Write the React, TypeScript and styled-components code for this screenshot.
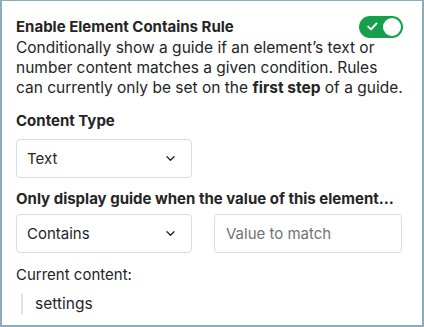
import React from "react";
import styled, { createGlobalStyle } from "styled-components";

const Global = createGlobalStyle`
  html, body { margin: 0; padding: 0; background: #fff; }
  body { font-family: Inter, "Noto Sans", sans-serif; color: #252525; }
  * { box-sizing: border-box; }
`;

const Panel = styled.div`
  width: 424px;
  height: 327px;
  border: 2px solid #8eabb9;
  border-top-width: 1px;
  padding: 14px 20px 0 14px;
  display: flex;
  flex-direction: column;
  background: #fff;
  overflow: hidden;
`;

const Header = styled.div`
  display: flex;
  align-items: flex-start;
  justify-content: space-between;
`;

const Title = styled.div`
  font-size: 15px;
  font-weight: 700;
  line-height: 20px;
  margin-top: 2px;
`;

const Desc = styled.p`
  margin: 0;
  font-size: 15.5px;
  line-height: 20px;
  white-space: nowrap;
  b { font-weight: 700; }
`;

const Toggle = styled.div`
  width: 44px;
  height: 22px;
  border-radius: 11px;
  background: #15a04b;
  position: relative;
  flex-shrink: 0;
  margin-top: 1px;
  margin-right: -1px;
`;

const Knob = styled.div`
  position: absolute;
  right: 2px;
  top: 2px;
  width: 18px;
  height: 18px;
  border-radius: 50%;
  background: #fff;
`;

const Check = styled.svg`
  position: absolute;
  left: 8px;
  top: 6px;
`;

const Label = styled.div<{ $top: number }>`
  font-size: 15px;
  font-weight: 700;
  line-height: 20px;
  margin-top: ${(p) => p.$top}px;
`;

const Row = styled.div<{ $top: number }>`
  display: flex;
  gap: 22px;
  margin-top: ${(p) => p.$top}px;
`;

const Select = styled.div<{ $w: number }>`
  width: ${(p) => p.$w}px;
  height: 39px;
  border: 1px solid #dcdce0;
  border-radius: 4px;
  display: flex;
  align-items: center;
  justify-content: space-between;
  padding: 0 16px 0 10px;
  font-size: 15px;
`;

const Input = styled.div`
  flex: 1;
  height: 39px;
  border: 1px solid #dcdce0;
  border-radius: 4px;
  display: flex;
  align-items: center;
  padding: 0 11px;
  font-size: 15px;
  color: #737373;
`;

const Plain = styled.div`
  font-size: 15px;
  line-height: 20px;
  margin-top: 12px;
`;

const Quote = styled.div`
  margin-top: 9px;
  margin-left: 5px;
  border-left: 2px solid #e2e2e6;
  padding-left: 12px;
  font-size: 15.5px;
  line-height: 20px;
`;

const Chevron = () => (
  <svg width="9" height="5" viewBox="0 0 9 5" fill="none">
    <path d="M1 0.8l3.5 3.4 3.5-3.4" stroke="#222" strokeWidth="1.3" strokeLinecap="round" strokeLinejoin="round" />
  </svg>
);

export default function App() {
  return (
    <>
      <Global />
      <Panel>
        <Header>
          <Title>Enable Element Contains Rule</Title>
          <Toggle>
            <Check width="11" height="9" viewBox="0 0 11 9" fill="none">
              <path d="M1.2 4.6l2.8 2.8 5.6-6" stroke="#fff" strokeWidth="1.9" strokeLinecap="round" strokeLinejoin="round" />
            </Check>
            <Knob />
          </Toggle>
        </Header>
        <Desc>
          Conditionally show a guide if an element’s text or
          <br />
          number content matches a given condition. Rules
          <br />
          can currently only be set on the <b>first step</b> of a guide.
        </Desc>
        <Label $top={13}>Content Type</Label>
        <Row $top={8}>
          <Select $w={176}>
            Text
            <Chevron />
          </Select>
        </Row>
        <Label $top={11}>Only display guide when the value of this element...</Label>
        <Row $top={5}>
          <Select $w={176}>
            Contains
            <Chevron />
          </Select>
          <Input>Value to match</Input>
        </Row>
        <Plain>Current content:</Plain>
        <Quote>settings</Quote>
      </Panel>
    </>
  );
}
